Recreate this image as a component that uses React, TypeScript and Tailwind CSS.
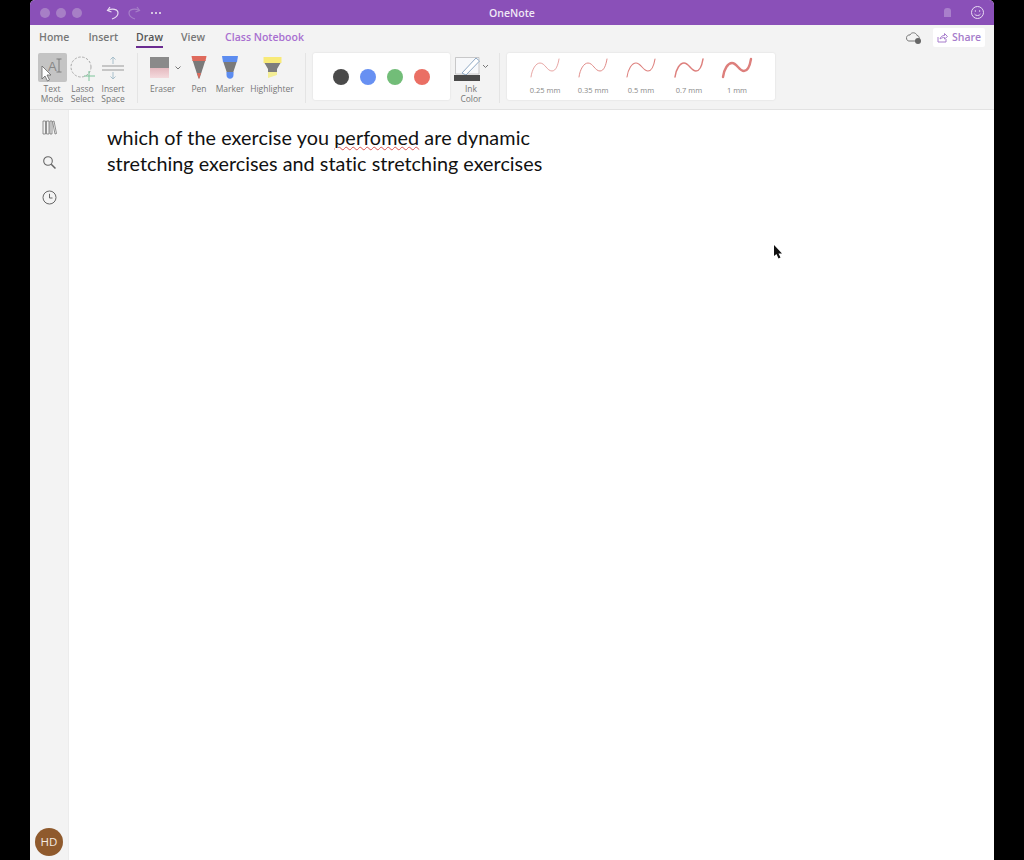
import React from "react";

const F = "font-['Open_Sans',sans-serif]";

function Squiggle({ w, c = "#dd7f7c" }: { w: number; c?: string }) {
  return (
    <svg width="32" height="24" viewBox="0 0 32 24" fill="none">
      <path d="M2 21C3 13 7 7 11 7C16 7 18 15 23 15C27 15 29 9 30 3" stroke={c} strokeWidth={w} strokeLinecap="round" />
    </svg>
  );
}

function Label({ children }: { children: React.ReactNode }) {
  return <div className="text-[8.5px] leading-[10px] text-[#777] text-center whitespace-nowrap">{children}</div>;
}

function Tool({ icon, label, w }: { icon: React.ReactNode; label: React.ReactNode; w: string }) {
  return (
    <div className={`flex flex-col items-center ${w}`}>
      <div className="h-[29px] flex items-center justify-center">{icon}</div>
      <div className="mt-[2px]"><Label>{label}</Label></div>
    </div>
  );
}

function Width({ w, label }: { w: number; label: string }) {
  return (
    <div className="w-[48px] flex flex-col items-center">
      <Squiggle w={w} />
      <div className="text-[7.5px] leading-[10px] text-[#888] mt-[5px]">{label}</div>
    </div>
  );
}

function Sep() {
  return <div className="w-px h-[50px] bg-[#e4e4e4]" />;
}

export default function App() {
  return (
    <div className={`w-[1024px] h-[860px] bg-black flex pl-[30px] overflow-hidden relative ${F}`}>
      <div className="w-[964px] h-[860px] bg-white flex flex-col rounded-t-[5px] overflow-hidden">
        {/* Title bar */}
        <div className="h-[25px] bg-[#8a50b8] flex items-center relative shrink-0">
          <div className="flex gap-[6px] ml-[10px]">
            <div className="w-[10px] h-[10px] rounded-full bg-[#a77fc6]" />
            <div className="w-[10px] h-[10px] rounded-full bg-[#a77fc6]" />
            <div className="w-[10px] h-[10px] rounded-full bg-[#a77fc6]" />
          </div>
          <svg className="ml-[23px]" width="16" height="16" viewBox="0 0 16 16" fill="none" stroke="#e8dcf2" strokeWidth="1.2">
            <path d="M5 2L2.5 5.5L6.5 7" />
            <path d="M3 5.5C7 3 13 4 13 8C13 11 10 13 7 14" />
          </svg>
          <svg className="ml-[5px]" width="16" height="16" viewBox="0 0 16 16" fill="none" stroke="#a67fc8" strokeWidth="1.2">
            <path d="M11 2L13.5 5.5L9.5 7" />
            <path d="M13 5.5C9 3 3 4 3 8C3 11 6 13 9 14" />
          </svg>
          <div className="ml-[9px] flex gap-[2px]">
            <div className="w-[2px] h-[2px] rounded-full bg-[#eee]" />
            <div className="w-[2px] h-[2px] rounded-full bg-[#eee]" />
            <div className="w-[2px] h-[2px] rounded-full bg-[#eee]" />
          </div>
          <div className="absolute left-0 right-0 top-[1px] h-[25px] flex items-center justify-center text-[10.5px] font-semibold text-[#f0e8f6]">OneNote</div>
          <div className="ml-auto flex items-center gap-[19px] mr-[9px]">
            <div className="w-[7px] h-[9px] rounded-t-[3px] bg-[#a97fcb]" />
            <svg width="15" height="15" viewBox="0 0 15 15" fill="none" stroke="#e8dcf2" strokeWidth="1">
              <circle cx="7.5" cy="7.5" r="6" />
              <circle cx="5.4" cy="6" r="0.7" fill="#e8dcf2" stroke="none" />
              <circle cx="9.6" cy="6" r="0.7" fill="#e8dcf2" stroke="none" />
              <path d="M4.5 9C5.5 11 9.5 11 10.5 9" />
            </svg>
          </div>
        </div>

        {/* Tabs */}
        <div className="h-[24px] pt-[1px] bg-[#f3f3f3] flex items-center shrink-0 text-[10.5px] font-semibold text-[#777]">
          <div className="ml-[9px]">Home</div>
          <div className="ml-[19px]">Insert</div>
          <div className="ml-[18px] relative text-[#555]">
            Draw
            <div className="absolute left-0 right-0 top-[16px] h-[2px] bg-[#6b2c91]" />
          </div>
          <div className="ml-[18px]">View</div>
          <div className="ml-[20px] text-[#a86fd0]">Class Notebook</div>
          <div className="ml-auto flex items-center mr-[9px]">
            <svg width="17" height="15" viewBox="0 0 17 15" fill="none" stroke="#777" strokeWidth="1">
              <path d="M4 11H12C15 11 15 5.5 12 5.5C11 2 6 2 5 5C0.5 4.5 0.5 11 4 11Z" />
              <circle cx="13" cy="11" r="3" fill="#666" stroke="none" />
            </svg>
            <div className="ml-[11px] h-[19px] w-[52px] bg-white rounded-[2px] flex items-center justify-center gap-[4px] text-[#a67ccb]">
              <svg width="11" height="11" viewBox="0 0 11 11" fill="none" stroke="#a67ccb" strokeWidth="1">
                <path d="M1 5V10H9V7" />
                <path d="M3 7C3.5 4.5 5.5 3.5 7.5 3.5V1.5L10.5 4.5L7.5 7V5.5C6 5.5 4.5 5.8 3 7Z" />
              </svg>
              <span>Share</span>
            </div>
          </div>
        </div>

        {/* Ribbon */}
        <div className="h-[61px] bg-[#f3f3f3] border-b border-[#e2e2e2] flex items-start shrink-0 pt-[4px] pl-[7px]">
          <Tool
            w="w-[30px]"
            label={<>Text<br />Mode</>}
            icon={
              <div className="w-[29px] h-[29px] bg-[#c4c4c4] rounded-[2px] flex items-center justify-center">
                <svg width="28" height="28" viewBox="0 0 28 28" fill="none">
                  <text x="10" y="17" fontSize="13" fill="#888" fontFamily="Liberation Sans">A</text>
                  <path d="M21 5V18M18.5 5H23.5M18.5 18H23.5" stroke="#777" strokeWidth="0.9" />
                  <path d="M4 12V25L7 22L9.5 27L11.5 26L9 21H13Z" fill="#fff" stroke="#666" strokeWidth="0.8" />
                </svg>
              </div>
            }
          />
          <Tool
            w="w-[31px]"
            label={<>Lasso<br />Select</>}
            icon={
              <svg width="28" height="28" viewBox="0 0 28 28" fill="none">
                <circle cx="12" cy="13" r="10" stroke="#aaa" strokeWidth="1" strokeDasharray="2.5 1.5" />
                <path d="M20 17V27M15 22H26" stroke="#7cc59a" strokeWidth="1" />
              </svg>
            }
          />
          <Tool
            w="w-[30px]"
            label={<>Insert<br />Space</>}
            icon={
              <svg width="24" height="26" viewBox="0 0 24 26" fill="none">
                <path d="M1 11H23M1 15H23" stroke="#999" strokeWidth="1" />
                <path d="M12 9V2M9.5 4.5L12 2L14.5 4.5M12 17V24M9.5 21.5L12 24L14.5 21.5" stroke="#a9c0cc" strokeWidth="1" />
              </svg>
            }
          />
          <div className="ml-[9px]"><Sep /></div>
          <div className="ml-[12px] flex flex-col items-start w-[24px]">
            <div className="h-[29px] flex items-center">
              <div className="w-[19px] h-[21px] flex flex-col">
                <div className="h-[11px] bg-[#8a8a8a]" />
                <div className="h-[10px] bg-gradient-to-b from-[#e4b9bf] to-[#f4dadd]" />
              </div>
            </div>
            <div className="mt-[2px]"><Label>Eraser</Label></div>
          </div>
          <svg className="mt-[12px]" width="8" height="6" viewBox="0 0 8 6" fill="none" stroke="#777" strokeWidth="1">
            <path d="M1.5 1.5L4 4L6.5 1.5" />
          </svg>
          <div className="ml-[4px]">
            <Tool
              w="w-[26px]"
              label="Pen"
              icon={
                <svg width="16" height="23" viewBox="0 0 16 23">
                  <path d="M1.5 4H14.5L9 21L8 23L7 21Z" fill="#7a7a7a" />
                  <path d="M0.5 0H15.5L14.5 5H1.5Z" fill="#df6a5c" />
                  <path d="M6 17H10L8 23Z" fill="#df6a5c" />
                </svg>
              }
            />
          </div>
          <div className="ml-[4px]">
            <Tool
              w="w-[28px]"
              label="Marker"
              icon={
                <svg width="18" height="23" viewBox="0 0 18 23">
                  <path d="M2 5H16L12 17H6Z" fill="#7a7a7a" />
                  <path d="M1 0H17L16 6H2Z" fill="#5c8cf0" />
                  <path d="M5.5 16H12.5V19C12.5 24 5.5 24 5.5 19Z" fill="#5c8cf0" />
                </svg>
              }
            />
          </div>
          <div className="ml-[5px]">
            <Tool
              w="w-[46px]"
              label="Highlighter"
              icon={
                <svg width="19" height="21" viewBox="0 0 19 21">
                  <path d="M0.5 0H18.5V6H0.5Z" fill="#f8ea78" />
                  <path d="M1.5 6H17.5L14 12V15H5V12Z" fill="#7d7d7d" />
                  <path d="M5 15H14V18L5 21Z" fill="#f4ee96" />
                </svg>
              }
            />
          </div>
          <div className="ml-[10px]"><Sep /></div>
          <div className="ml-[7px] w-[137px] h-[47px] bg-white rounded-[2px] shadow-[0_0_2px_rgba(0,0,0,0.12)] flex items-center justify-center gap-[11px]">
            <div className="w-4 h-4 rounded-full bg-[#4a4a4a]" />
            <div className="w-4 h-4 rounded-full bg-[#6790f2]" />
            <div className="w-4 h-4 rounded-full bg-[#72bd78]" />
            <div className="w-4 h-4 rounded-full bg-[#ea6f64]" />
          </div>
          <div className="w-[42px] flex flex-col items-center">
            <div className="h-[29px] flex items-start">
              <svg width="36" height="29" viewBox="0 0 36 29" fill="none">
                <path d="M2.5 4.5H26V21H2.5Z" fill="#f7f8fa" stroke="#b5b5b5" strokeWidth="0.7" />
                <path d="M9 20L23 5L26.5 8L13 22Z" fill="#fff" stroke="#8fa9c4" strokeWidth="1" />
                <path d="M1 22H27V28H1Z" fill="#4a4a4a" />
                <path d="M30 12L32.5 14.5L35 12" stroke="#777" strokeWidth="1" />
              </svg>
            </div>
            <div className="mt-[2px]"><Label>Ink<br />Color</Label></div>
          </div>
          <div className="ml-[7px]"><Sep /></div>
          <div className="ml-[7px] w-[268px] h-[47px] bg-white rounded-[2px] shadow-[0_0_2px_rgba(0,0,0,0.12)] flex items-start pt-[3px] pl-[14px]">
            <Width w={0.7} label="0.25 mm" />
            <Width w={0.9} label="0.35 mm" />
            <Width w={1.1} label="0.5 mm" />
            <Width w={1.5} label="0.7 mm" />
            <Width w={2.4} label="1 mm" />
          </div>
        </div>

        {/* Body */}
        <div className="flex-1 flex min-h-0">
          <div className="w-[39px] bg-[#f3f3f3] border-r border-[#ececec] flex flex-col items-center shrink-0 pt-[10px]">
            <svg width="15" height="15" viewBox="0 0 15 15" fill="none" stroke="#777" strokeWidth="0.8">
              <path d="M1 1H3.5V14H1ZM4.5 1H7V14H4.5ZM8 1H10V14H8ZM10.5 1.5L12 1L14.5 13.5L13 14Z" />
            </svg>
            <svg className="mt-[20px]" width="15" height="15" viewBox="0 0 15 15" fill="none" stroke="#666" strokeWidth="1.1">
              <circle cx="6" cy="6" r="4.3" />
              <path d="M9.2 9.2L13.5 13.5" strokeWidth="1.5" />
            </svg>
            <svg className="mt-[20px]" width="15" height="15" viewBox="0 0 15 15" fill="none" stroke="#666" strokeWidth="1">
              <circle cx="7.5" cy="7.5" r="6.5" />
              <path d="M7.5 3.8V8H10.5" />
            </svg>
            <div className="mt-auto mb-[4px] w-[28px] h-[28px] rounded-full bg-[#8f5a2d] flex items-center justify-center text-[11.5px] text-[#f5ece3]">HD</div>
          </div>
          <div className="flex-1 bg-white pl-[38px] pt-[14px] font-['Lato',sans-serif] text-[19.8px] leading-[26px] text-[#111]">
            <div className="tracking-[0.08px]">
              which of the exercise you{" "}
              <span className="underline decoration-wavy decoration-[#d9534f] decoration-[1px] underline-offset-1">perfomed</span>{" "}
              are dynamic
            </div>
            <div className="tracking-[0.02px]">stretching exercises and static stretching exercises</div>
          </div>
        </div>
      </div>

      {/* Mouse pointer */}
      <svg className="absolute left-[772px] top-[244px]" width="12" height="16" viewBox="0 0 12 16">
        <path d="M2 1V12L4.5 10L6.5 14.5L8.5 13.5L6.5 9.5H10Z" fill="#111" />
      </svg>
    </div>
  );
}
